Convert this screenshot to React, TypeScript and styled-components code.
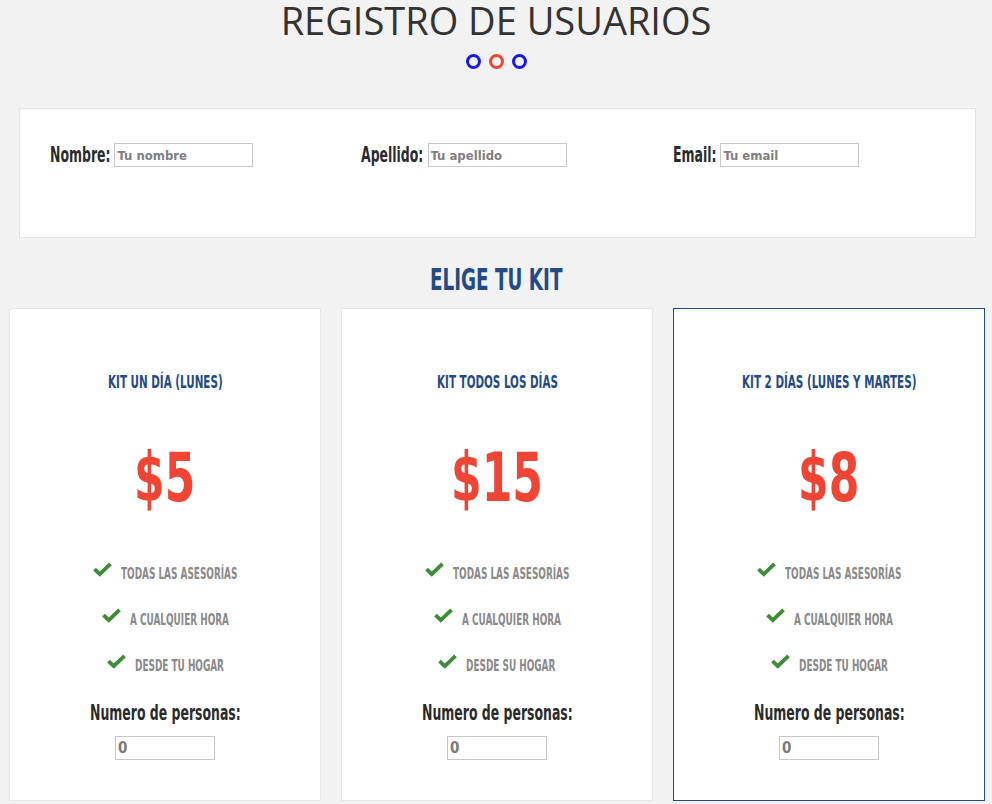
import React, { useLayoutEffect, useRef, useState } from "react";
import styled, { createGlobalStyle } from "styled-components";

const Global = createGlobalStyle`
  html, body { margin: 0; padding: 0; background: #f2f2f2; }
  body { font-family: "DejaVu Sans Condensed", "DejaVu Sans", sans-serif; }
  * { box-sizing: border-box; }
`;

const cond = `"DejaVu Sans Condensed", "DejaVu Sans", sans-serif`;

/* Oswald-like narrow lettering: a condensed face squeezed horizontally */
const NarrowSpan = styled.span<{ $s: number }>`
  display: inline-block;
  white-space: nowrap;
  transform: scaleX(${(p) => p.$s});
  transform-origin: left center;
`;

function Narrow({ children, s = 0.66 }: { children: React.ReactNode; s?: number }) {
  const ref = useRef<HTMLSpanElement>(null);
  const [mr, setMr] = useState(0);
  useLayoutEffect(() => {
    const measure = () => {
      if (ref.current) setMr(-ref.current.offsetWidth * (1 - s));
    };
    measure();
    if (document.fonts && document.fonts.ready) document.fonts.ready.then(measure);
  }, [s]);
  return (
    <NarrowSpan ref={ref} $s={s} style={{ marginRight: mr }}>
      {children}
    </NarrowSpan>
  );
}

const Page = styled.div`
  width: 992px;
  display: flex;
  flex-direction: column;
  align-items: center;
`;

const Title = styled.h1`
  margin: 0;
  font-family: "Open Sans", sans-serif;
  font-weight: 400;
  font-size: 38px;
  line-height: 40px;
  color: #333;
`;

const Dots = styled.div`
  display: flex;
  gap: 8px;
  margin-top: 14px;
  height: 15px;
`;

const Dot = styled.span<{ $red?: boolean }>`
  width: 15px;
  height: 15px;
  border-radius: 50%;
  border: 3.5px solid ${(p) => (p.$red ? "#f04434" : "#1a1ae8")};
`;

const FormBox = styled.div`
  align-self: flex-start;
  margin: 39px 0 0 19px;
  width: 957px;
  height: 130px;
  background: #fff;
  border: 1px solid #e3e3e3;
  padding: 34px 0 0 30px;
  display: grid;
  grid-template-columns: 311px 312px 311px;
  align-items: start;
`;

const Field = styled.label`
  display: flex;
  align-items: center;
  gap: 4px;
  font-family: ${cond};
  font-weight: 700;
  font-size: 21px;
  line-height: 24px;
  color: #2b2b2b;
`;

const TextInput = styled.input`
  width: 139px;
  height: 24px;
  margin: 0;
  border: 1px solid #c8c8c8;
  padding: 0 2px;
  font-family: ${cond};
  font-weight: 700;
  font-size: 13px;
  color: #777;
  background: #fff;
  outline: none;
  &::placeholder { color: #808080; }
`;

const Section = styled.h2`
  margin: 24px 0 0;
  font-family: ${cond};
  font-weight: 700;
  font-size: 30px;
  line-height: 36px;
  color: #244a86;
`;

const Cards = styled.div`
  align-self: flex-start;
  margin: 10px 0 0 9px;
  display: grid;
  grid-template-columns: repeat(3, 312px);
  gap: 20px;
`;

const Card = styled.div<{ $active?: boolean }>`
  height: 493px;
  background: #fff;
  border: 1px solid ${(p) => (p.$active ? "#244a86" : "#e6e6e6")};
  display: flex;
  flex-direction: column;
  align-items: center;
  padding-top: 62px;
`;

const KitName = styled.h3`
  margin: 0;
  font-family: ${cond};
  font-weight: 700;
  font-size: 18px;
  line-height: 22px;
  color: #244a86;
`;

const Price = styled.div`
  margin-top: 45px;
  font-family: ${cond};
  font-weight: 700;
  font-size: 68px;
  line-height: 80px;
  color: #f04434;
`;

const Features = styled.ul`
  list-style: none;
  margin: 46px 0 0;
  padding: 0;
  display: flex;
  flex-direction: column;
  align-items: center;
  gap: 26px;
`;

const Feature = styled.li`
  display: flex;
  align-items: flex-start;
  gap: 9px;
  height: 20px;
  font-family: ${cond};
  font-weight: 700;
  font-size: 15px;
  line-height: 20px;
  color: #8a8a8a;
  text-transform: uppercase;
`;

const CheckIcon = styled.svg`
  margin-top: -2px;
  flex: none;
`;

const Check = () => (
  <CheckIcon width="19" height="15" viewBox="0 0 19 15">
    <path d="M1.5 7.2 L6.8 12.2 L17.5 1.8" fill="none" stroke="#3c8c38" strokeWidth="3.8" strokeLinejoin="miter" />
  </CheckIcon>
);

const PeopleLabel = styled.div`
  margin-top: 25px;
  font-family: ${cond};
  font-weight: 700;
  font-size: 21px;
  line-height: 24px;
  color: #2b2b2b;
`;

const NumInput = styled.input`
  margin: 11px 0 0;
  width: 100px;
  height: 24px;
  border: 1px solid #c8c8c8;
  padding: 0 2px;
  font-family: ${cond};
  font-weight: 700;
  font-size: 15px;
  color: #7a7a7a;
  background: #fff;
  outline: none;
`;

const kits = [
  { name: "KIT UN DÍA (LUNES)", price: "$5", place: "DESDE TU HOGAR" },
  { name: "KIT TODOS LOS DÍAS", price: "$15", place: "DESDE SU HOGAR" },
  { name: "KIT 2 DÍAS (LUNES Y MARTES)", price: "$8", place: "DESDE TU HOGAR", active: true },
];

export default function App() {
  return (
    <Page>
      <Global />
      <Title>REGISTRO DE USUARIOS</Title>
      <Dots>
        <Dot />
        <Dot $red />
        <Dot />
      </Dots>
      <FormBox>
        <Field><Narrow>Nombre:</Narrow><TextInput placeholder="Tu nombre" /></Field>
        <Field><Narrow>Apellido:</Narrow><TextInput placeholder="Tu apellido" /></Field>
        <Field><Narrow>Email:</Narrow><TextInput placeholder="Tu email" /></Field>
      </FormBox>
      <Section><Narrow s={0.68}>ELIGE TU KIT</Narrow></Section>
      <Cards>
        {kits.map((k) => (
          <Card key={k.name} $active={k.active}>
            <KitName><Narrow s={0.64}>{k.name}</Narrow></KitName>
            <Price><Narrow s={0.72}>{k.price}</Narrow></Price>
            <Features>
              <Feature><Check /><Narrow>Todas las asesorías</Narrow></Feature>
              <Feature><Check /><Narrow>A cualquier hora</Narrow></Feature>
              <Feature><Check /><Narrow>{k.place}</Narrow></Feature>
            </Features>
            <PeopleLabel><Narrow>Numero de personas:</Narrow></PeopleLabel>
            <NumInput defaultValue="0" />
          </Card>
        ))}
      </Cards>
    </Page>
  );
}
